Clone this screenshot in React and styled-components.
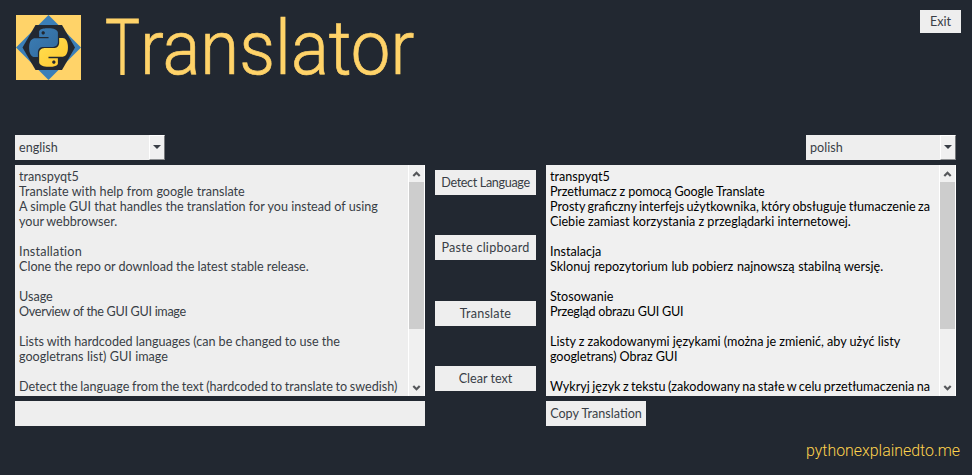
import React from 'react';
import styled, { createGlobalStyle } from 'styled-components';

const Global = createGlobalStyle`
  *, *::before, *::after { box-sizing: border-box; }
  body { margin: 0; background: #222831; overflow: hidden; }
  button { border: 0; border-radius: 0; padding: 0; }
`;

const Window = styled.main`
  display: flex;
  flex-direction: column;
  width: 972px;
  height: 475px;
  background: #222831;
  font: 12.6px/15px Lato, "Open Sans", sans-serif;
  color: #393e46;
`;

const Header = styled.header`
  display: flex;
  align-items: flex-start;
  height: 135px;
  padding: 10px 11px 0 16px;
`;

const Logo = styled.svg`
  flex: none;
  width: 65px;
  height: 65px;
  margin-top: 5px;
`;

const Title = styled.h1`
  display: flex;
  flex: 1;
  margin: 0 0 0 24px;
  font: 300 77px/77px Roboto, sans-serif;
  color: #ffd369;
  white-space: nowrap;
`;

const Initial = styled.span`
  width: 35px;
  transform: scaleX(0.76);
  transform-origin: left;
  -webkit-text-stroke: 0.8px #ffd369;
`;

const Rest = styled.span`
  font-size: 76px;
  transform: scaleX(0.93);
  transform-origin: left;
  -webkit-text-stroke: 0.7px #ffd369;
`;

const Button = styled.button`
  width: ${p => p.$width}px;
  height: ${p => p.$height || 25}px;
  background: #eeeeee;
  color: #393e46;
  font: inherit;
  letter-spacing: ${p => p.$tracking || 0}px;
  white-space: nowrap;
`;

const Workspace = styled.section`
  display: grid;
  grid-template-columns: 410px 101px 410px;
  grid-template-rows: 25px 231px 25px;
  gap: 5px 10px;
  padding-left: 15px;
`;

const Select = styled.div`
  grid-column: ${p => p.$column};
  justify-self: ${p => p.$align};
  display: flex;
  justify-content: space-between;
  align-items: center;
  width: 150px;
  height: 25px;
  padding-left: 4px;
  background: #eeeeee;
`;

const SelectArrow = styled.span`
  display: flex;
  align-items: center;
  justify-content: center;
  width: 16px;
  height: 25px;
  padding-bottom: 1px;
  background: #f0f0f0;
  border: 1px solid;
  border-color: #ffffff #75777a #8f9193 #ffffff;
`;

const TextArea = styled.div`
  grid-column: ${p => p.$column};
  grid-row: 2;
  display: flex;
  justify-content: space-between;
  background: ${p => p.$bg};
  color: ${p => p.$color};
`;

const Lines = styled.div`
  padding: 4px 0 0 4px;
`;

const Line = styled.p`
  height: 15px;
  margin: 0;
  white-space: pre;
  word-spacing: ${p => p.$gap || 0}px;
  letter-spacing: ${p => p.$tracking || 0}px;
`;

const ScrollBar = styled.div`
  display: flex;
  flex-direction: column;
  justify-content: space-between;
  width: 17px;
  background: #f0f0f0;
  border: solid #ffffff;
  border-width: 0 1px;
`;

const ScrollArrow = styled.svg`
  display: block;
  width: 15px;
  height: 17px;
`;

const Thumb = styled.div`
  height: 147px;
  margin-bottom: auto;
  background: #cdcdcd;
`;

const Actions = styled.div`
  grid-column: 2;
  grid-row: 2;
  display: flex;
  flex-direction: column;
  justify-content: space-between;
  padding: 5px 0;
`;

const StatusField = styled.div`
  grid-column: 1;
  grid-row: 3;
  background: #eeeeee;
`;

const CopySlot = styled.div`
  display: flex;
  grid-column: 3;
  grid-row: 3;
`;

const Footer = styled.footer`
  display: flex;
  justify-content: flex-end;
  padding: 15px 12px 0 0;
  font: 300 15.9px/20px Roboto, sans-serif;
  color: #ffd34d;
`;

const SNAKE =
  'M14.25.18l.9.2.73.26.59.3.45.32.34.34.25.34.16.33.1.3.04.26.02.2-.01.13V8.5l-.05.63-.13.55-.21.46-.26.38-.3.31-.33.25-.35.19-.35.14-.33.1-.3.07-.26.04-.21.02H8.77l-.69.05-.59.14-.5.22-.41.27-.33.32-.27.35-.2.36-.15.37-.1.35-.07.32-.04.27-.02.21v3.06H3.17l-.21-.03-.28-.07-.32-.12-.35-.18-.36-.26-.36-.36-.35-.46-.32-.59-.28-.73-.21-.88-.14-1.05-.05-1.23.06-1.22.16-1.04.24-.87.32-.71.36-.57.4-.44.42-.33.42-.24.4-.16.36-.1.32-.05.24-.01h.16l.06.01h8.16v-.83H6.18l-.01-2.75-.02-.37.05-.34.11-.31.17-.28.25-.26.31-.23.38-.2.44-.18.51-.15.58-.12.64-.1.71-.06.77-.04.84-.02 1.27.05zm-6.3 1.98l-.23.33-.08.41.08.41.23.34.33.22.41.09.41-.09.33-.22.23-.34.08-.41-.08-.41-.23-.33-.33-.22-.41-.09-.41.09z';

function PythonLogo() {
  return (
    <Logo viewBox="0 0 65 65" aria-label="Python">
      <defs>
        <linearGradient id="blue" x1="0" y1="0" x2="1" y2="1">
          <stop offset="0" stopColor="#3b7eb6" />
          <stop offset="1" stopColor="#32699b" />
        </linearGradient>
        <linearGradient id="yellow" x1="1" y1="1" x2="0" y2="0">
          <stop offset="0" stopColor="#ffdf52" />
          <stop offset="1" stopColor="#ffc82e" />
        </linearGradient>
      </defs>
      <rect width="65" height="65" fill="#ffd369" />
      <path d="M32.5 0L65 32.5 32.5 65 0 32.5z" fill="#3b7fb8" />
      <path d="M19.500 10h26.500L59 32.500 46 55H19.500L6.500 32.500z" fill="#222831" />
      <g transform="translate(13.200 13.200) scale(1.610)">
        <path d={SNAKE} fill="url(#blue)" />
        <path d={SNAKE} fill="url(#yellow)" transform="rotate(180 12 12)" />
      </g>
    </Logo>
  );
}

function LanguageSelect({ value, column, align }) {
  return (
    <Select $column={column} $align={align}>
      {value}
      <SelectArrow>
        <svg width="8" height="4" viewBox="0 0 8 4">
          <path d="M0 0h8L4 4z" fill="#393e46" />
        </svg>
      </SelectArrow>
    </Select>
  );
}

function Scroll() {
  return (
    <ScrollBar>
      <ScrollArrow viewBox="0 0 15 17">
        <path d="M4.300 11L7.500 7.800 10.700 11" fill="none" stroke="#55575a" strokeWidth="2.200" />
      </ScrollArrow>
      <Thumb />
      <ScrollArrow viewBox="0 0 15 17">
        <path d="M4.300 7L7.500 10.200 10.700 7" fill="none" stroke="#55575a" strokeWidth="2.200" />
      </ScrollArrow>
    </ScrollBar>
  );
}

const ENGLISH = [
  ['transpyqt5'],
  ['Translate with help from google translate', 0.2],
  ['A simple GUI that handles the translation for you instead of using'],
  ['your webbrowser.', -0.5],
  [''],
  ['Installation', 0, 0.2],
  ['Clone the repo or download the latest stable release.', -0.1],
  [''],
  ['Usage'],
  ['Overview of the GUI GUI image', 0, -0.3],
  [''],
  ['Lists with hardcoded languages (can be changed to use the', -0.2],
  ['googletrans list) GUI image', 0.2],
  [''],
  ['Detect the language from the text (hardcoded to translate to swedish)', -0.6],
];

const POLISH = [
  ['transpyqt5'],
  ['Przetłumacz z pomocą Google Translate', 0, -0.13],
  ['Prosty graficzny interfejs użytkownika, który obsługuje tłumaczenie za', -0.8],
  ['Ciebie zamiast korzystania z przeglądarki internetowej.'],
  [''],
  ['Instalacja'],
  ['Sklonuj repozytorium lub pobierz najnowszą stabilną wersję.', 0.4],
  [''],
  ['Stosowanie'],
  ['Przegląd obrazu GUI GUI', 0, -0.22],
  [''],
  ['Listy z zakodowanymi językami (można je zmienić, aby użyć listy', -0.1],
  ['googletrans) Obraz GUI', 0, -0.1],
  [''],
  ['Wykryj język z tekstu (zakodowany na stałe w celu przetłumaczenia na', -0.8],
];

function TextPane({ lines, column, bg, color }) {
  return (
    <TextArea $column={column} $bg={bg} $color={color}>
      <Lines>
        {lines.map(([text, gap, tracking], i) => (
          <Line key={i} $gap={gap} $tracking={tracking}>{text}</Line>
        ))}
      </Lines>
      <Scroll />
    </TextArea>
  );
}

export default function App() {
  return (
    <Window>
      <Global />
      <Header>
        <PythonLogo />
        <Title>
          <Initial>T</Initial>
          <Rest>ranslator</Rest>
        </Title>
        <Button $width={41} $height={23}>Exit</Button>
      </Header>
      <Workspace>
        <LanguageSelect value="english" column={1} align="start" />
        <LanguageSelect value="polish" column={3} align="end" />
        <TextPane lines={ENGLISH} column={1} bg="#eeeeee" color="#393e46" />
        <Actions>
          <Button $width={101} $tracking={-0.35}>Detect Language</Button>
          <Button $width={101} $tracking={0.25}>Paste clipboard</Button>
          <Button $width={101} $tracking={0.2}>Translate</Button>
          <Button $width={101}>Clear text</Button>
        </Actions>
        <TextPane lines={POLISH} column={3} bg="#f0f0f0" color="#000000" />
        <StatusField />
        <CopySlot>
          <Button $width={100}>Copy Translation</Button>
        </CopySlot>
      </Workspace>
      <Footer>pythonexplainedto.me</Footer>
    </Window>
  );
}
